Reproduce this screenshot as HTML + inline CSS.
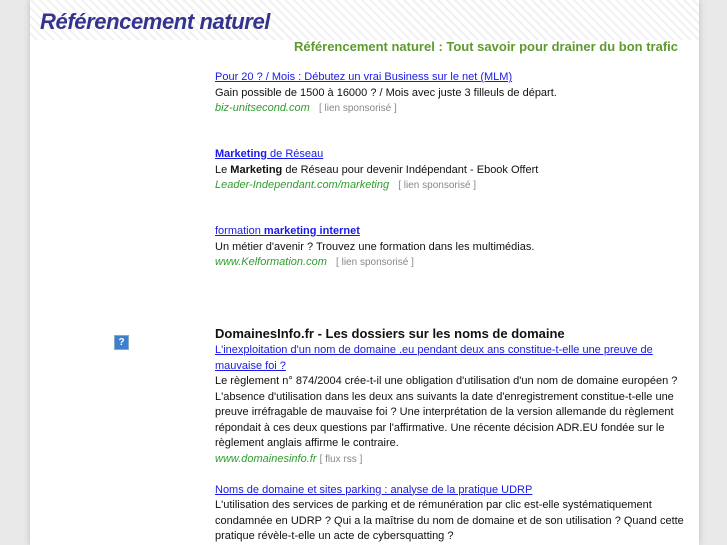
<!DOCTYPE html>
<html><head><meta charset="utf-8"><style>
body{margin:0;width:727px;height:545px;overflow:hidden;background:#e9e9e9;font-family:"Liberation Sans",sans-serif;}
#c{position:absolute;left:30px;top:0;width:669px;height:545px;background:#fff;box-shadow:0 0 6px #bbb;}
#hd{position:absolute;left:0;top:0;width:669px;height:40px;background:repeating-linear-gradient(45deg,#fff 0 4px,#f1f1f1 4px 6px);}
h1{position:absolute;left:10px;top:9px;margin:0;font-size:22px;font-style:italic;font-weight:bold;color:#34348f;letter-spacing:-0.4px}
h2{position:absolute;right:21px;top:39px;margin:0;font-size:13px;font-weight:bold;color:#5e9a2e;}
.b{position:absolute;left:185px;font-size:11px;line-height:15.5px;color:#111;width:480px}
a{color:#1a1ae6;text-decoration:underline}
.u{color:#2f9d2f;font-style:italic}
.s{color:#888;font-size:10px}
.t{font-size:13px;font-weight:bold;color:#111;line-height:18px}
#q{position:absolute;left:84px;top:335px;width:13px;height:13px;background:#3f7fd0;border:1px solid #8ab;color:#fff;font-size:10px;font-weight:bold;text-align:center;line-height:13px}
</style></head><body><div id="c">
<div id="hd"></div>
<h1>Référencement naturel</h1>
<h2>Référencement naturel : Tout savoir pour drainer du bon trafic</h2>
<div class="b" style="top:70px"><a>Pour 20 ? / Mois : Débutez un vrai Business sur le net (MLM)</a><br>Gain possible de 1500 à 16000 ? / Mois avec juste 3 filleuls de départ.<br><span class="u">biz-unitsecond.com</span> &nbsp; <span class="s">[ lien sponsorisé ]</span></div>
<div class="b" style="top:147px"><a><b>Marketing</b> de Réseau</a><br>Le <b>Marketing</b> de Réseau pour devenir Indépendant - Ebook Offert<br><span class="u">Leader-Independant.com/marketing</span> &nbsp; <span class="s">[ lien sponsorisé ]</span></div>
<div class="b" style="top:224px"><a>formation <b>marketing internet</b></a><br>Un métier d'avenir ? Trouvez une formation dans les multimédias.<br><span class="u">www.Kelformation.com</span> &nbsp; <span class="s">[ lien sponsorisé ]</span></div>
<div id="q">?</div>
<div class="b" style="top:325px"><div class="t">DomainesInfo.fr - Les dossiers sur les noms de domaine</div><a>L'inexploitation d'un nom de domaine .eu pendant deux ans constitue-t-elle une preuve de mauvaise foi ?</a><br>Le règlement n° 874/2004 crée-t-il une obligation d'utilisation d'un nom de domaine européen ? L'absence d'utilisation dans les deux ans suivants la date d'enregistrement constitue-t-elle une preuve irréfragable de mauvaise foi ? Une interprétation de la version allemande du règlement répondait à ces deux questions par l'affirmative. Une récente décision ADR.EU fondée sur le règlement anglais affirme le contraire.<br><span class="u">www.domainesinfo.fr</span> <span class="s">[ flux rss ]</span><br><br><a>Noms de domaine et sites parking : analyse de la pratique UDRP</a><br>L'utilisation des services de parking et de rémunération par clic est-elle systématiquement condamnée en UDRP ? Qui a la maîtrise du nom de domaine et de son utilisation ? Quand cette pratique révèle-t-elle un acte de cybersquatting ?</div>
</div></body></html>
